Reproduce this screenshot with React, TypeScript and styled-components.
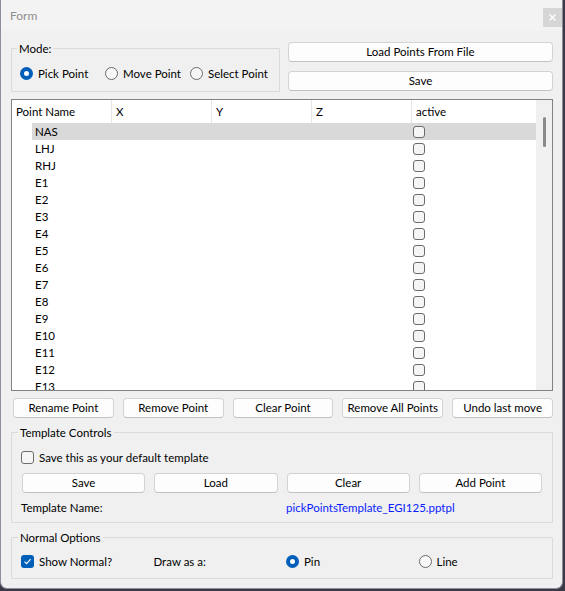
import React from 'react'
import styled, { createGlobalStyle } from 'styled-components'

const GlobalStyle = createGlobalStyle`
	* { box-sizing: border-box; }
	html, body {
		margin: 0;
		padding: 0;
		background: #3a3947;
	}
	body {
		font-family: Lato, 'Liberation Sans', sans-serif;
		font-size: 11.5px;
		color: #000;
	}
`

const Window = styled.div`
	width: 563px;
	height: 589px;
	display: flex;
	flex-direction: column;
	background: #f0f0f0;
	border: 1px solid #8e8d98;
	border-top: none;
	border-radius: 0 0 7px 7px;
	overflow: hidden;
`

const TitleBar = styled.div`
	height: 31px;
	flex: none;
	display: flex;
	justify-content: space-between;
	align-items: flex-start;
	background: #f3f3f3;
`

const Title = styled.div`
	padding: 9px 0 0 9px;
	line-height: 14px;
	font-size: 12px;
	color: #8f8f8f;
`

const CloseButton = styled.div`
	width: 19px;
	height: 19px;
	margin-top: 8px;
	display: grid;
	place-items: center;
	background: #d6d6d6;
`

const Body = styled.div`
	flex: 1;
	display: flex;
	flex-direction: column;
	padding: 11px 9px 0 10px;
`

const TopRow = styled.div`
	display: flex;
	align-items: flex-start;
	gap: 8px;
	height: 49px;
`

const GroupBox = styled.section`
	border: 1px solid #dadada;
	border-radius: 1px;
`

const GroupTitle = styled.div`
	width: fit-content;
	margin: -7px 0 0 -3px;
	padding: 0 2px;
	line-height: 13px;
	background: #f0f0f0;
`

const ModeBox = styled(GroupBox)`
	width: 269px;
	height: 44px;
	margin-top: 6px;
	padding: 0 8px;
`

const RadioGrid = styled.div`
	display: grid;
	grid-template-columns: repeat(3, 85px);
	margin-top: 12px;
`

const OptionLabel = styled.label`
	display: flex;
	align-items: center;
	gap: 5px;
	line-height: 13px;
	white-space: nowrap;
`

const RadioDot = styled.span<{ $checked?: boolean }>`
	flex: none;
	width: 13px;
	height: 13px;
	border-radius: 50%;
	${p =>
		p.$checked
			? 'background: #fff; border: 4px solid #005fb8;'
			: 'background: #f7f7f7; border: 1px solid #6b6b6b;'}
`

const CheckBox = styled.span<{ $checked?: boolean; $size?: number }>`
	flex: none;
	width: ${p => p.$size || 13}px;
	height: ${p => p.$size || 13}px;
	border-radius: 3px;
	display: grid;
	place-items: center;
	${p =>
		p.$checked
			? 'background: #005fb8; border: none;'
			: 'background: #f5f5f5; border: 1px solid #6b6b6b;'}
`

const ButtonColumn = styled.div`
	flex: 1;
	display: flex;
	flex-direction: column;
	gap: 9px;
`

const Button = styled.button`
	height: 20px;
	padding: 0;
	font: inherit;
	line-height: 18px;
	color: #000;
	background: #fdfdfd;
	border: 1px solid #d3d3d3;
	border-bottom-color: #c2c2c2;
	border-radius: 4px;
	white-space: nowrap;
`

const Table = styled.div`
	height: 292px;
	margin-top: 8px;
	display: grid;
	grid-template-columns: 1fr 16px;
	background: #fff;
	border: 1px solid #828282;
	overflow: hidden;
`

const TableMain = styled.div`
	display: flex;
	flex-direction: column;
	overflow: hidden;
`

const HeaderRow = styled.div`
	flex: none;
	height: 23px;
	display: grid;
	grid-template-columns: 100px 100px 100px 100px 1fr;
`

const HeaderCell = styled.div`
	padding-left: 4px;
	line-height: 23px;
	border-right: 1px solid #e5e5e5;

	&:last-child {
		border-right: none;
	}
`

const DataRow = styled.div<{ $selected?: boolean }>`
	flex: none;
	height: 17px;
	margin-left: 20px;
	display: grid;
	grid-template-columns: 80px 100px 100px 100px 1fr;
	align-items: center;
	background: ${p => (p.$selected ? '#d9d9d9' : 'transparent')};
`

const NameCell = styled.div`
	padding-left: 3px;
	line-height: 17px;
`

const ActiveCell = styled.div`
	grid-column: 5;
	padding-left: 1px;
`

const ScrollTrack = styled.div`
	display: flex;
	justify-content: center;
	padding-top: 17px;
	background: #f0f0f0;
`

const ScrollThumb = styled.div`
	width: 3px;
	height: 30px;
	border-radius: 2px;
	background: #8a8a8a;
`

const ActionRow = styled.div`
	display: flex;
	gap: 9px;
	margin-top: 7px;
	padding-left: 2px;

	& > button {
		flex: 1;
	}
`

const TemplateBox = styled(GroupBox)`
	height: 91px;
	margin-top: 14px;
	padding: 0 10px 0 9px;
`

const CheckRow = styled.div`
	margin-top: 12px;
`

const FourColumns = styled.div<{ $gap: number }>`
	display: grid;
	grid-template-columns: repeat(4, 1fr);
	column-gap: ${p => p.$gap}px;
`

const TemplateButtons = styled(FourColumns)`
	margin-top: 9px;
	padding-left: 1px;
`

const NameRow = styled(FourColumns)`
	margin-top: 8px;
	line-height: 13px;
`

const NameLabel = styled.div`
	grid-column: span 2;
`

const NameValue = styled.div`
	grid-column: span 2;
	color: #0a1cff;
`

const NormalBox = styled(GroupBox)`
	height: 42px;
	margin-top: 14px;
	padding: 0 9px;
`

const NormalRow = styled(FourColumns)`
	margin-top: 11px;
	align-items: center;
	line-height: 13px;
`

// only the rows that show in the list window
const pointNames = [
	'NAS', 'LHJ', 'RHJ',
	...Array.from({ length: 13 }, (_, i) => `E${i + 1}`),
]

const Check = () => (
	<svg width='9' height='9' viewBox='0 0 9 9'>
		<path d='M1.5 4.6 L3.6 6.7 L7.6 2.2' fill='none' stroke='#fff' strokeWidth='1.1' />
	</svg>
)

const App = (): JSX.Element => {
	return (
		<>
			<GlobalStyle />
			<Window>
				<TitleBar>
					<Title>Form</Title>
					<CloseButton>
						<svg width='7' height='7' viewBox='0 0 7 7'>
							<path d='M0.5 0.5 L6.5 6.5 M6.5 0.5 L0.5 6.5' stroke='#fff' strokeWidth='1.3' />
						</svg>
					</CloseButton>
				</TitleBar>

				<Body>
					<TopRow>
						<ModeBox>
							<GroupTitle>Mode:</GroupTitle>
							<RadioGrid>
								<OptionLabel><RadioDot $checked />Pick Point</OptionLabel>
								<OptionLabel><RadioDot />Move Point</OptionLabel>
								<OptionLabel><RadioDot />Select Point</OptionLabel>
							</RadioGrid>
						</ModeBox>
						<ButtonColumn>
							<Button>Load Points From File</Button>
							<Button>Save</Button>
						</ButtonColumn>
					</TopRow>

					<Table>
						<TableMain>
							<HeaderRow>
								<HeaderCell>Point Name</HeaderCell>
								<HeaderCell>X</HeaderCell>
								<HeaderCell>Y</HeaderCell>
								<HeaderCell>Z</HeaderCell>
								<HeaderCell>active</HeaderCell>
							</HeaderRow>
							{pointNames.map((name, i) => (
								<DataRow key={name} $selected={i === 0}>
									<NameCell>{name}</NameCell>
									<ActiveCell>
										<CheckBox $size={12} />
									</ActiveCell>
								</DataRow>
							))}
						</TableMain>
						<ScrollTrack>
							<ScrollThumb />
						</ScrollTrack>
					</Table>

					<ActionRow>
						<Button>Rename Point</Button>
						<Button>Remove Point</Button>
						<Button>Clear Point</Button>
						<Button>Remove All Points</Button>
						<Button>Undo last move</Button>
					</ActionRow>

					<TemplateBox>
						<GroupTitle>Template Controls</GroupTitle>
						<CheckRow>
							<OptionLabel><CheckBox />Save this as your default template</OptionLabel>
						</CheckRow>
						<TemplateButtons $gap={9}>
							<Button>Save</Button>
							<Button>Load</Button>
							<Button>Clear</Button>
							<Button>Add Point</Button>
						</TemplateButtons>
						<NameRow $gap={9}>
							<NameLabel>Template Name:</NameLabel>
							<NameValue>pickPointsTemplate_EGI125.pptpl</NameValue>
						</NameRow>
					</TemplateBox>

					<NormalBox>
						<GroupTitle>Normal Options</GroupTitle>
						<NormalRow $gap={8}>
							<OptionLabel><CheckBox $checked><Check /></CheckBox>Show Normal?</OptionLabel>
							<div>Draw as a:</div>
							<OptionLabel><RadioDot $checked />Pin</OptionLabel>
							<OptionLabel><RadioDot />Line</OptionLabel>
						</NormalRow>
					</NormalBox>
				</Body>
			</Window>
		</>
	)
}

export default App
